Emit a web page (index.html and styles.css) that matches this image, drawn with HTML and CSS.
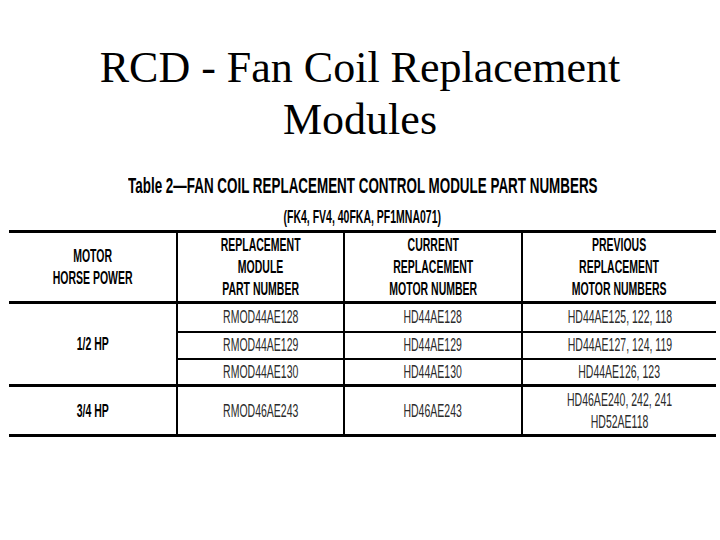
FILE: index.html
```html
<!DOCTYPE html>
<html lang="en">
<head>
<meta charset="utf-8">
<title>RCD - Fan Coil Replacement Modules</title>
<link rel="stylesheet" href="styles.css">
</head>
<body>
<h1 class="title">RCD - Fan Coil Replacement<br>Modules</h1>
<div class="caption"><span class="narrow">Table 2—FAN COIL REPLACEMENT CONTROL MODULE PART NUMBERS</span></div>
<div class="subcaption"><span class="narrow">(FK4, FV4, 40FKA, PF1MNA071)</span></div>
<table class="parts">
  <colgroup>
    <col class="col-hp">
    <col class="col-module">
    <col class="col-current">
    <col class="col-previous">
  </colgroup>
  <thead>
    <tr class="head-row">
      <th><span class="narrow">MOTOR<br>HORSE POWER</span></th>
      <th><span class="narrow">REPLACEMENT<br>MODULE<br>PART NUMBER</span></th>
      <th><span class="narrow">CURRENT<br>REPLACEMENT<br>MOTOR NUMBER</span></th>
      <th><span class="narrow">PREVIOUS<br>REPLACEMENT<br>MOTOR NUMBERS</span></th>
    </tr>
  </thead>
  <tbody class="group">
    <tr class="row-a">
      <td rowspan="3" class="hp"><span class="narrow">1/2 HP</span></td>
      <td><span class="narrow">RMOD44AE128</span></td>
      <td><span class="narrow">HD44AE128</span></td>
      <td><span class="narrow">HD44AE125, 122, 118</span></td>
    </tr>
    <tr class="row-b">
      <td><span class="narrow">RMOD44AE129</span></td>
      <td><span class="narrow">HD44AE129</span></td>
      <td><span class="narrow">HD44AE127, 124, 119</span></td>
    </tr>
    <tr class="row-b">
      <td><span class="narrow">RMOD44AE130</span></td>
      <td><span class="narrow">HD44AE130</span></td>
      <td><span class="narrow">HD44AE126, 123</span></td>
    </tr>
  </tbody>
  <tbody class="group">
    <tr class="row-c">
      <td class="hp"><span class="narrow">3/4 HP</span></td>
      <td><span class="narrow">RMOD46AE243</span></td>
      <td><span class="narrow">HD46AE243</span></td>
      <td><span class="narrow">HD46AE240, 242, 241<br>HD52AE118</span></td>
    </tr>
  </tbody>
</table>
</body>
</html>
```

FILE: styles.css
```css
html, body {
  margin: 0;
  padding: 0;
  background: #ffffff;
  overflow: hidden;
}

body {
  width: 720px;
  height: 540px;
  color: #000;
  font-family: "Liberation Sans", Arial, sans-serif;
}

.title {
  margin: 42px 0 0;
  font-family: "Liberation Serif", "Times New Roman", serif;
  font-weight: normal;
  font-size: 44px;
  line-height: 52px;
  text-align: center;
}

.narrow {
  display: inline-block;
  white-space: nowrap;
  transform: scaleX(0.6);
  transform-origin: center center;
}

.caption {
  display: flex;
  justify-content: center;
  margin-top: 28px;
  padding-left: 5px;
  font-weight: bold;
  font-size: 22px;
  line-height: 24px;
}

.caption .narrow {
  transform: scaleX(0.61);
}

.subcaption {
  display: flex;
  justify-content: center;
  margin-top: 9px;
  padding-left: 4px;
  font-weight: bold;
  font-size: 17.5px;
  line-height: 20px;
}

.parts {
  margin: 3px 0 0 9px;
  width: 707px;
  table-layout: fixed;
  border-collapse: collapse;
  font-size: 17.5px;
  line-height: 22px;
}

.col-hp { width: 168px; }
.col-module { width: 167px; }
.col-current { width: 178px; }
.col-previous { width: 194px; }

.parts th,
.parts td {
  padding: 0;
  text-align: center;
  vertical-align: middle;
  border-left: 2px solid #000;
}

.parts th:first-child,
.parts td.hp {
  border-left: none;
}

.parts th {
  font-weight: bold;
  color: #000;
  border-top: 3px solid #000;
  border-bottom: 3px solid #000;
}

.parts td {
  font-weight: normal;
  color: #2a2a2a;
  border-bottom: 2px solid #000;
}

.group td.hp {
  font-weight: bold;
  color: #000;
}

.group tr:last-child td,
.parts td.hp {
  border-bottom: 3px solid #000;
}

.head-row { height: 71px; }
.row-a { height: 29px; }
.row-b { height: 27px; }
.row-c { height: 50px; }
```
